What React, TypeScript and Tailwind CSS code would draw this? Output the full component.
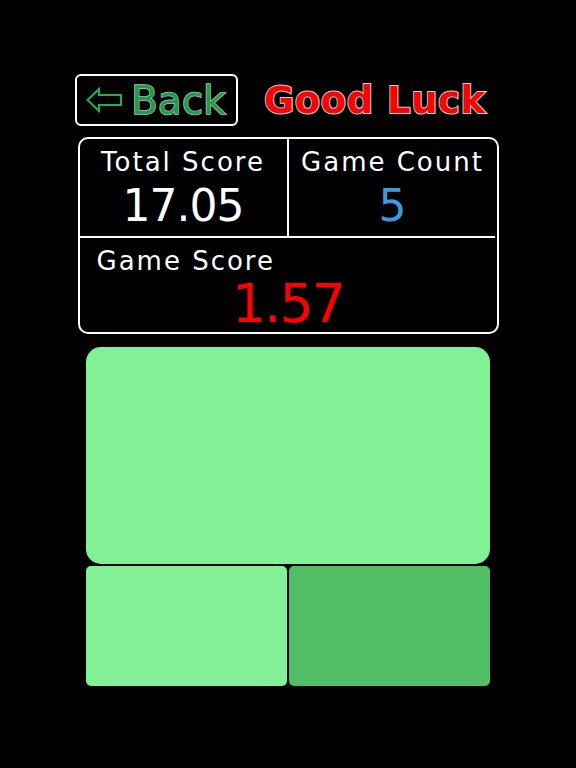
import React from "react";

const font = { fontFamily: '"DejaVu Sans", "Noto Sans", sans-serif' };

export default function App() {
  return (
    <div className="w-[576px] h-[768px] bg-black flex flex-col items-center pt-[74px]" style={font}>
      <div className="w-[426px] flex items-center">
        <div className="w-[163px] h-[52px] border-2 border-white rounded-[6px] flex items-center pl-[9px] gap-[7px]">
          <svg width="38" height="26" viewBox="0 0 38 26" fill="none">
            <path d="M1.5 13 L13 2 L13 8 L35 8 L35 18 L13 18 L13 24 Z" stroke="#1fb04f" strokeWidth="2" strokeLinejoin="miter" />
          </svg>
          <span className="text-[39px] leading-none text-[#1a9e48] font-normal tracking-[0px] [-webkit-text-stroke:1.5px_#bdbdbd] [paint-order:stroke_fill]">Back</span>
        </div>
        <span className="ml-[26px] text-[37px] leading-none text-[#ff0000] font-bold tracking-[0.5px] [-webkit-text-stroke:2px_#cfcfcf] [paint-order:stroke_fill]">Good Luck</span>
      </div>

      <div className="mt-[11px] w-[421px] h-[197px] border-2 border-white rounded-[10px] flex flex-col text-white">
        <div className="h-[97px] flex">
          <div className="w-[209px] border-r-2 border-white flex flex-col items-center pt-[8px]">
            <span className="text-[26px] leading-[30px] tracking-[2px]">Total Score</span>
            <span className="mt-[5px] text-[44px] leading-[48px] tracking-[-1px]">17.05</span>
          </div>
          <div className="flex-1 flex flex-col items-center pt-[8px]">
            <span className="text-[26px] leading-[30px] tracking-[2px]">Game Count</span>
            <span className="mt-[5px] text-[44px] leading-[48px] text-[#3c9be0]">5</span>
          </div>
        </div>
        <div className="h-[2px] bg-white mr-[2px]"></div>
        <div className="flex-1 flex flex-col pt-[8px]">
          <span className="pl-[17px] text-[26px] leading-[30px] tracking-[2px]">Game Score</span>
          <span className="self-center text-[54px] leading-[56px] tracking-[-2px] text-[#ff0000]">1.57</span>
        </div>
      </div>

      <div className="mt-[13px] w-[404px] flex flex-col gap-[2px]">
        <div className="h-[217px] bg-[#82f095] rounded-[15px]"></div>
        <div className="h-[120px] flex gap-[2px]">
          <div className="flex-1 bg-[#82f095] rounded-[5px]"></div>
          <div className="flex-1 bg-[#50be64] rounded-[5px]"></div>
        </div>
      </div>
    </div>
  );
}
